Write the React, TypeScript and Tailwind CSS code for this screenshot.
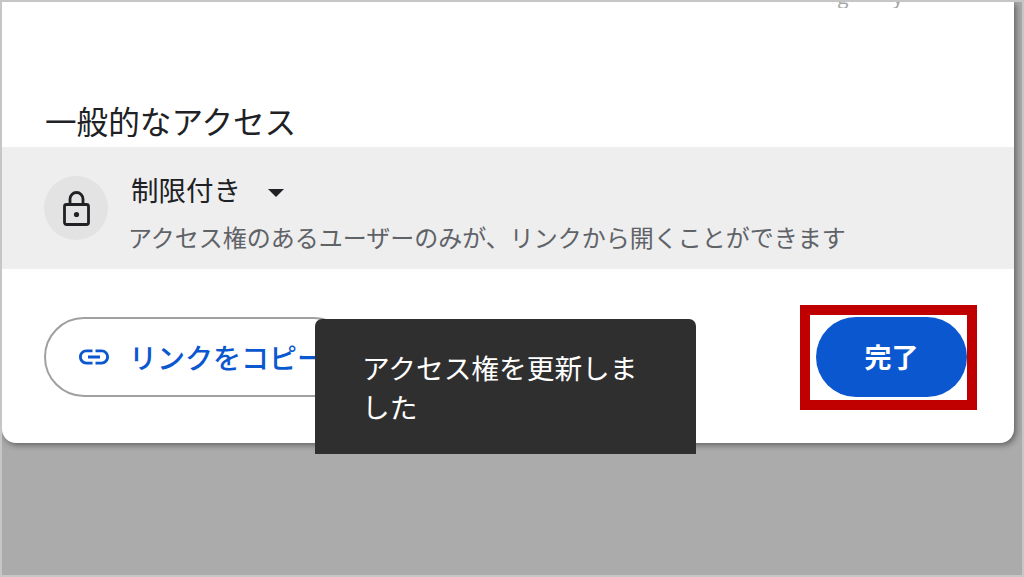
const font = "font-['Noto_Sans_CJK_JP','Noto_Sans',sans-serif]";

function LockIcon() {
  return (
    <svg width="27" height="35" viewBox="0 0 27 35" fill="none" stroke="#202124" strokeWidth="2.8">
      <rect x="1.5" y="13.5" width="24" height="20" rx="2" />
      <path d="M7 13V8a6.5 6.5 0 0 1 13 0V13" />
      <circle cx="13.5" cy="23.5" r="2.6" fill="#202124" stroke="none" />
    </svg>
  );
}

function LinkIcon() {
  return (
    <svg width="36" height="36" viewBox="0 0 24 24" fill="currentColor" className="shrink-0">
      <path d="M3.9 12c0-1.71 1.39-3.1 3.1-3.1h4V7H7c-2.76 0-5 2.24-5 5s2.24 5 5 5h4v-1.9H7c-1.71 0-3.1-1.39-3.1-3.1zM8 13h8v-2H8v2zm9-6h-4v1.9h4c1.71 0 3.1 1.39 3.1 3.1s-1.39 3.1-3.1 3.1h-4V17h4c2.76 0 5-2.24 5-5s-2.24-5-5-5z" />
    </svg>
  );
}

export default function App() {
  return (
    <div className={`w-[1024px] h-[577px] overflow-hidden border-2 border-[#c6c6c6] bg-[#ababab] ${font}`}>
      <div className="relative w-[1012px] h-[441px] bg-white rounded-b-[14px] shadow-[2px_2px_6px_rgba(0,0,0,0.45)]">
        {/* cut off text from the row above */}
        <div className="absolute left-[835px] top-[-19px] h-[25px] overflow-hidden text-[20px] leading-[25px] tracking-[44px] text-[#a8a8a8]">
          gy
        </div>

        <div className="pl-[43px] pt-[96px] h-[145px]">
          <h2 className="text-[31.6px] leading-[44px] font-normal text-[#202124] whitespace-nowrap">一般的なアクセス</h2>
        </div>

        <div className="flex h-[122px] bg-[#eeeeee] pl-[42px]">
          <div className="self-center flex items-center justify-center w-[64px] h-[64px] rounded-full bg-[#e3e3e3]">
            <LockIcon />
          </div>
          <div className="ml-[20px] mt-[22px]">
            <div className="flex items-center h-[40px] pl-[3px] text-[27.5px] leading-[40px] text-[#202124]">
              制限付き
              <span className="ml-[27px] mt-[7px] w-0 h-0 border-x-[8px] border-x-transparent border-t-[8px] border-t-[#202124]" />
            </div>
            <p className="mt-[10px] text-[24px] leading-[36px] text-[#5f6368] whitespace-nowrap">
              アクセス権のあるユーザーのみが、リンクから開くことができます
            </p>
          </div>
        </div>

        <div className="flex items-start justify-between pl-[42px] pr-[47px] pt-[48px]">
          <button className="flex items-center w-[310px] h-[80px] rounded-full border-2 border-[#a0a0a0] bg-white pl-[30px] text-[28px] font-medium text-[#0b57d0] whitespace-nowrap">
            <LinkIcon />
            <span className="ml-[17px]">リンクをコピー</span>
          </button>
          <button className="w-[151px] h-[80px] rounded-full bg-[#0b57d0] text-white text-[27px] font-semibold">
            完了
          </button>
        </div>

        {/* red annotation around the done button */}
        <div className="absolute left-[798px] top-[303px] w-[177px] h-[105px] border-[10px] border-[#c00000]" />

        {/* toast */}
        <div className="absolute left-[313px] top-[317px] w-[381px] h-[135px] rounded-t-[7px] bg-[#2f2f2f] pl-[47px] pr-[50px] pt-[29px] text-[27.7px] leading-[39px] text-white">
          アクセス権を更新しました
        </div>
      </div>
    </div>
  );
}
